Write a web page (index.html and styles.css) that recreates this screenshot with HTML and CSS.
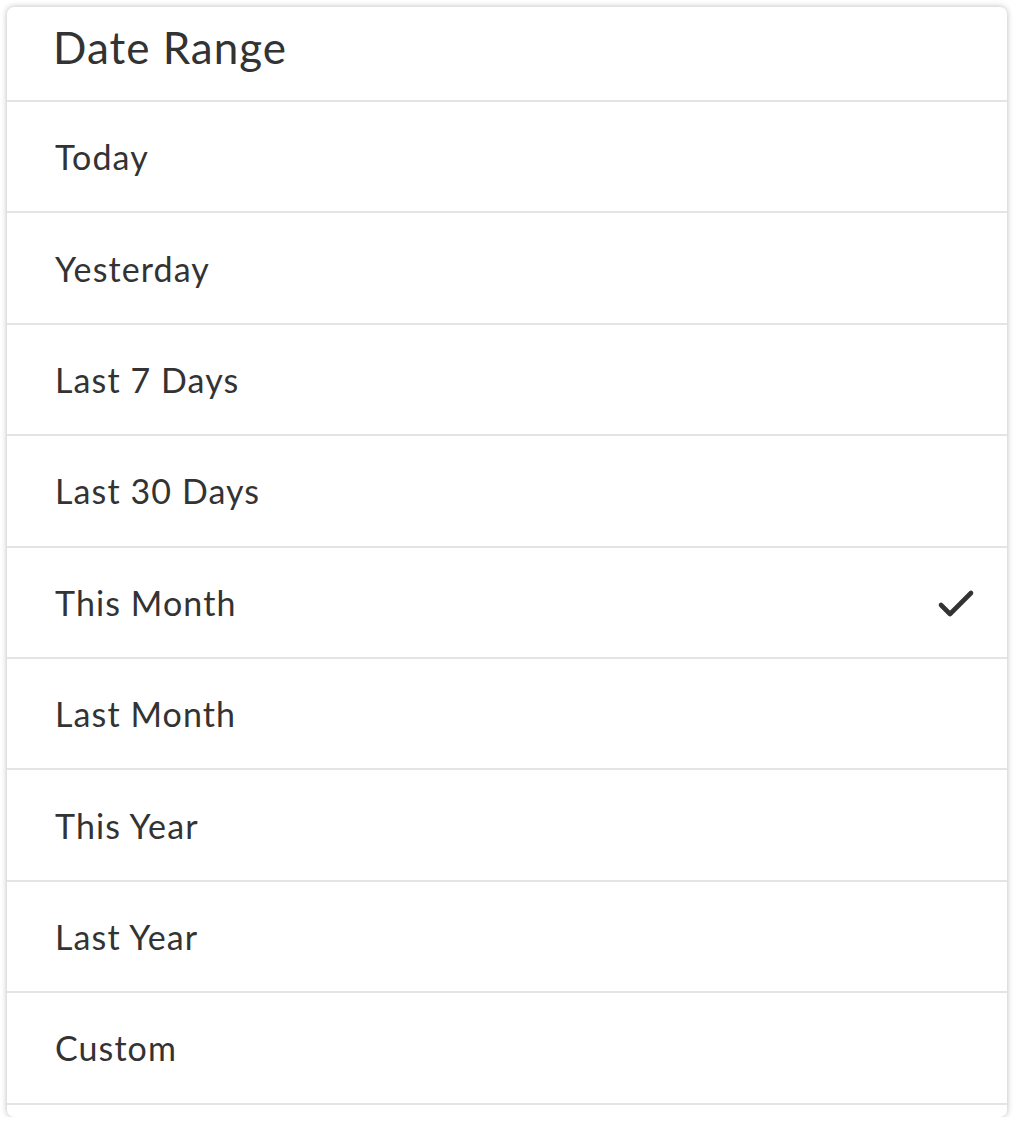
FILE: index.html
```html
<!DOCTYPE html>
<html lang="en">
<head>
<meta charset="utf-8">
<title>Date Range</title>
<link rel="stylesheet" href="styles.css">
</head>
<body>
<div class="card">
  <div class="header">Date Range</div>
  <ul class="list">
    <li class="item">Today</li>
    <li class="item">Yesterday</li>
    <li class="item">Last 7 Days</li>
    <li class="item">Last 30 Days</li>
    <li class="item selected">This Month
      <svg class="check" viewBox="0 0 40 32" width="40" height="32" aria-hidden="true">
        <path d="M4 16 L13 25 L34 4" fill="none" stroke="#333" stroke-width="4.6" stroke-linecap="round" stroke-linejoin="round"/>
      </svg>
    </li>
    <li class="item">Last Month</li>
    <li class="item">This Year</li>
    <li class="item">Last Year</li>
    <li class="item">Custom</li>
    <li class="item more"></li>
  </ul>
</div>
</body>
</html>
```
FILE: styles.css
```css
html, body {
  margin: 0;
  padding: 0;
  background: #ffffff;
}

body {
  font-family: Lato, "Liberation Sans", sans-serif;
  color: #333333;
  padding: 7px 8px 0 7px;
}

.card {
  width: 1000px;
  height: 1110px;
  background: #ffffff;
  border-radius: 7px;
  box-shadow: 0 0 6px rgba(0, 0, 0, 0.28);
  overflow: hidden;
}

.header {
  height: 95px;
  box-sizing: border-box;
  padding: 0 0 0 46px;
  border-bottom: 2px solid #e4e4e4;
  font-size: 44px;
  letter-spacing: 1px;
  line-height: 80px;
  color: #333333;
}

.list {
  list-style: none;
  margin: 0;
  padding: 0;
}

.item {
  height: 111.4px;
  box-sizing: border-box;
  border-bottom: 2px solid #e4e4e4;
  display: flex;
  align-items: center;
  justify-content: space-between;
  padding: 0 30px 0 48px;
  font-size: 34px;
  letter-spacing: 1.1px;
  color: #333333;
}

.check {
  display: block;
  margin-top: 6px;
}

.more {
  height: 20px;
}
```
